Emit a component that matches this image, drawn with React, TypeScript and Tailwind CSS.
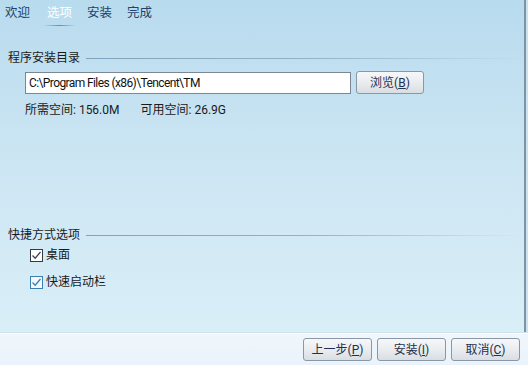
import React from 'react'

const TABS = [
  { id: 'welcome', label: '欢迎' },
  { id: 'options', label: '选项' },
  { id: 'install', label: '安装' },
  { id: 'done', label: '完成' },
]

const FONT = "font-['Roboto','Noto_Sans_CJK_SC',sans-serif]"

function Check({ label, hover }: { label: string; hover?: boolean }) {
  return (
    <label className="flex items-center gap-[3px] h-[14px]">
      <span
        className={`w-[13px] h-[13px] border flex items-center justify-center ${
          hover ? 'border-[#3c7fb1] bg-[#f2f8fd]' : 'border-[#333a44] bg-white'
        }`}
      >
        <svg width="11" height="11" viewBox="0 0 11 11">
          <path
            d="M1.5 5.5 L4.2 8.2 L9.5 2"
            fill="none"
            stroke={hover ? '#3c7fb1' : '#3a4656'}
            strokeWidth="1.3"
          />
        </svg>
      </span>
      <span className="text-[12px] text-[#1a1a1a]">{label}</span>
    </label>
  )
}

function SectionTitle({ text }: { text: string }) {
  return (
    <div className="flex items-center gap-[6px] pl-[8px] h-[16px]">
      <span className="text-[12px] text-[#1a1a1a] whitespace-nowrap">{text}</span>
      <div className="flex-1 h-px bg-gradient-to-r from-[#7fa4bd] via-[#8fb3ca] to-transparent" />
    </div>
  )
}

function Btn({ children, w }: { children: React.ReactNode; w: string }) {
  return (
    <button
      className={`${w} h-[23px] rounded-[3px] border border-[#8a97a5] bg-gradient-to-b from-[#f6f7f9] via-[#eaedf0] to-[#d9dee3] text-[12px] text-[#1f3050] leading-none`}
    >
      {children}
    </button>
  )
}

export default function App() {
  return (
    <div className={`${FONT} w-[528px] h-[365px] flex flex-col overflow-hidden`}>
      {/* main panel */}
      <div className="flex-1 flex bg-gradient-to-b from-[#b8dbee] via-[#cde6f3] to-[#d9eff8]">
        <div className="flex-1 flex flex-col">
          {/* tabs */}
          <div className="flex items-center h-[26px] pl-[5px] gap-[15px] text-[12.5px] text-[#22426a]">
            {TABS.map((t) => (
              <div key={t.id} className={`relative ${t.id === 'options' ? 'ml-[2px]' : ''}`}>
                <span className={t.id === 'options' ? 'text-white' : ''}>{t.label}</span>
                {t.id === 'options' && (
                  <div className="absolute left-[-4px] right-[-4px] bottom-[-4px] h-px bg-gradient-to-r from-transparent via-[#5f8fb8] to-transparent" />
                )}
              </div>
            ))}
          </div>

          <div className="mt-[24px]">
            <SectionTitle text="程序安装目录" />
          </div>

          <div className="flex items-center gap-[5px] pl-[25px] mt-[5px]">
            <div className="w-[326px] h-[22px] border border-[#7b8894] bg-white flex items-center pl-[3px] text-[12px] tracking-[-0.6px] text-[#111]">
              C:\Program Files (x86)\Tencent\TM
            </div>
            <Btn w="w-[68px]">浏览(<u>B</u>)</Btn>
          </div>

          <div className="flex gap-[21px] pl-[25px] mt-[7px] text-[12px] text-[#1a1a1a]">
            <span>所需空间: 156.0M</span>
            <span>可用空间: 26.9G</span>
          </div>

          <div className="mt-[108px]">
            <SectionTitle text="快捷方式选项" />
          </div>

          <div className="flex flex-col gap-[13px] pl-[30px] mt-[5px]">
            <Check label="桌面" />
            <Check label="快速启动栏" hover />
          </div>
        </div>
        <div className="w-[2px] bg-[#7f93a4]" />
        <div className="w-[2px] bg-[#c9e3f1]" />
      </div>

      {/* footer */}
      <div className="h-[32px] border-t border-white bg-gradient-to-b from-[#f0f6fc] to-[#eaf3fb] flex items-center justify-end gap-[5px] pr-[8px] shadow-[0_-1px_0_#cfe3ee]">
        <Btn w="w-[69px]">上一步(<u>P</u>)</Btn>
        <Btn w="w-[69px]">安装(<u>I</u>)</Btn>
        <Btn w="w-[69px]">取消(<u>C</u>)</Btn>
      </div>
    </div>
  )
}
